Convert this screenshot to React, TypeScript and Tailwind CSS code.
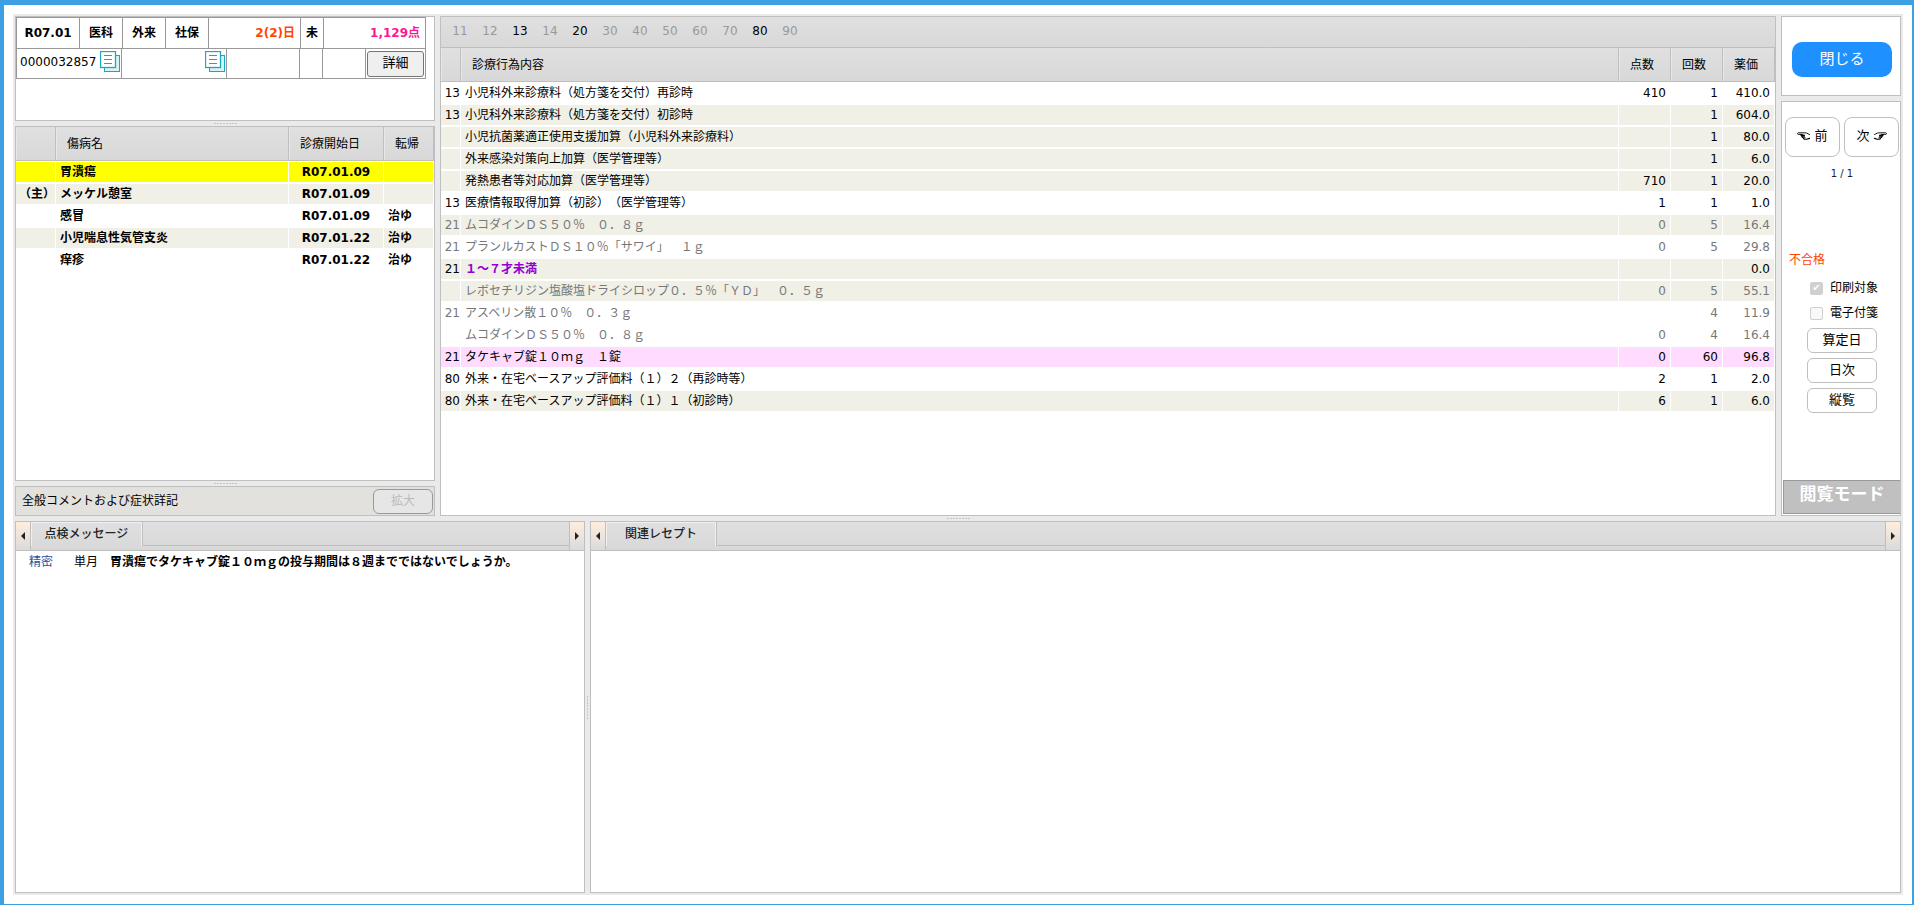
import { useState } from 'react'
import type { ReactNode } from 'react'

interface Disease {
  main?: boolean
  name: string
  start: string
  outcome?: string
  selected?: boolean
}

interface Treatment {
  code?: string
  name: string
  points?: string
  count?: string
  price: string
  tone?: 'muted' | 'comment' | 'hit'
  shaded?: boolean
}

const diseases: Disease[] = [
  { name: '胃潰瘍', start: 'R07.01.09', selected: true },
  { main: true, name: 'メッケル憩室', start: 'R07.01.09' },
  { name: '感冒', start: 'R07.01.09', outcome: '治ゆ' },
  { name: '小児喘息性気管支炎', start: 'R07.01.22', outcome: '治ゆ' },
  { name: '痒疹', start: 'R07.01.22', outcome: '治ゆ' },
]

const treatments: Treatment[] = [
  { code: '13', name: '小児科外来診療料（処方箋を交付）再診時', points: '410', count: '1', price: '410.0' },
  { code: '13', name: '小児科外来診療料（処方箋を交付）初診時', count: '1', price: '604.0', shaded: true },
  { name: '小児抗菌薬適正使用支援加算（小児科外来診療料）', count: '1', price: '80.0', shaded: true },
  { name: '外来感染対策向上加算（医学管理等）', count: '1', price: '6.0', shaded: true },
  { name: '発熱患者等対応加算（医学管理等）', points: '710', count: '1', price: '20.0', shaded: true },
  { code: '13', name: '医療情報取得加算（初診）（医学管理等）', points: '1', count: '1', price: '1.0' },
  { code: '21', name: 'ムコダインＤＳ５０％　０．８ｇ', points: '0', count: '5', price: '16.4', tone: 'muted', shaded: true },
  { code: '21', name: 'プランルカストＤＳ１０％「サワイ」　１ｇ', points: '0', count: '5', price: '29.8', tone: 'muted' },
  { code: '21', name: '１～７才未満', price: '0.0', tone: 'comment', shaded: true },
  { name: 'レボセチリジン塩酸塩ドライシロップ０．５％「ＹＤ」　０．５ｇ', points: '0', count: '5', price: '55.1', tone: 'muted', shaded: true },
  { code: '21', name: 'アスベリン散１０％　０．３ｇ', count: '4', price: '11.9', tone: 'muted' },
  { name: 'ムコダインＤＳ５０％　０．８ｇ', points: '0', count: '4', price: '16.4', tone: 'muted' },
  { code: '21', name: 'タケキャブ錠１０ｍｇ　１錠', points: '0', count: '60', price: '96.8', tone: 'hit' },
  { code: '80', name: '外来・在宅ベースアップ評価料（１）２（再診時等）', points: '2', count: '1', price: '2.0' },
  { code: '80', name: '外来・在宅ベースアップ評価料（１）１（初診時）', points: '6', count: '1', price: '6.0', shaded: true },
]

const categories = ['11', '12', '13', '14', '20', '30', '40', '50', '60', '70', '80', '90']
const activeCategories = ['13', '20', '80']

const headCell =
  'border-r border-b border-[#bfbfbf] bg-linear-to-b from-[#e0e0e0] to-[#d8d8d8] font-normal shadow-[inset_1px_0_0_#e8e8e8]'
const bodyCell = 'h-[22px] border-y border-r border-white bg-clip-padding p-0 leading-5'
const sideButton =
  'h-[25px] w-[70px] rounded-md border border-[#bfbfbf] bg-white pb-0.5 text-[13px] leading-5 hover:bg-gray-50'
const pagerButton =
  'flex h-10 w-[55px] items-center justify-center gap-1 rounded-lg border border-[#bfbfbf] pb-0.5 text-[13px] hover:bg-gray-50'

function CopyIcon() {
  return (
    <svg width="20" height="21" viewBox="0 0 20 21" fill="#fff" stroke="#17a9c0" className="shrink-0">
      <rect x="4.5" y="4.5" width="15" height="16" fill="#d9f2f6" />
      <rect x="0.5" y="0.5" width="15" height="16" strokeWidth="1.3" />
      <path d="M4 4.5h8M4 8.5h8M4 12.5h8" />
    </svg>
  )
}

function HandIcon({ flip = false }: { flip?: boolean }) {
  return (
    <svg
      width="13"
      height="8"
      viewBox="0 0 13 8"
      fill="none"
      stroke="#000"
      strokeLinecap="round"
      strokeLinejoin="round"
      className={flip ? '-scale-x-100' : ''}
    >
      <path d="M12.5 2.5 9.5 1 7 .8H1.2C.3 1 .3 2.2 1.2 2.4H5" strokeWidth="0.9" />
      <path d="M4 2.6 7.5 3.2M4.2 2.8c-.4.6 0 1.2.8 1.3h2.6M5.2 4.4c-.3.7.1 1.3.8 1.3h2M6.4 6c0 .7.5 1.2 1.2 1.2h2L12.5 6.4" strokeWidth="1.1" />
    </svg>
  )
}

function Handle({ vertical = false }: { vertical?: boolean }) {
  return (
    <div
      className={
        vertical
          ? 'flex w-[5px] shrink-0 items-center justify-center'
          : 'flex h-[5px] shrink-0 items-center justify-center'
      }
    >
      <span
        className={
          vertical
            ? 'h-[23px] w-px bg-[repeating-linear-gradient(to_bottom,#c4c4c4_0_2px,transparent_2px_3px)]'
            : 'h-px w-[23px] bg-[repeating-linear-gradient(to_right,#c4c4c4_0_2px,transparent_2px_3px)]'
        }
      />
    </div>
  )
}

function ScrollButton({ dir }: { dir: 'left' | 'right' }) {
  return (
    <button
      aria-label={dir === 'left' ? '前のタブ' : '次のタブ'}
      className={`flex w-[15px] shrink-0 items-center justify-center border-[#bfbfbf] bg-linear-to-b from-[#ffeedd] to-[#dadada] ${
        dir === 'left' ? 'border-r' : 'border-l'
      }`}
    >
      <svg width="4" height="8" viewBox="0 0 4 8" fill="#222">
        <path d={dir === 'left' ? 'M4 0v8L0 4z' : 'M0 0v8l4-4z'} />
      </svg>
    </button>
  )
}

interface TabPanelProps {
  title: string
  tabClass: string
  className: string
  children?: ReactNode
}

function TabPanel({ title, tabClass, className, children }: TabPanelProps) {
  return (
    <section className={`flex min-w-0 flex-col border border-[#bfbfbf] bg-white ${className}`}>
      <div className="flex h-[29px] shrink-0 border-b border-[#bfbfbf] bg-linear-to-b from-[#e0e0e0] to-[#d8d8d8]">
        <ScrollButton dir="left" />
        <div className="flex h-6 flex-1">
          <button
            className={`border-x border-t border-[#f0f0f0] pb-0.5 leading-5 font-medium text-[#222] shadow-[1px_0_0_#bfbfbf] ${tabClass}`}
          >
            {title}
          </button>
          <div className="ml-px flex-1 border-b border-[#bfbfbf]" />
        </div>
        <ScrollButton dir="right" />
      </div>
      {children}
    </section>
  )
}

function PatientInfo() {
  const cell = 'flex items-center border-r border-[#999]'
  return (
    <div className="h-[105px] border border-[#bfbfbf] bg-white">
      <div className="w-[410px] border-t border-l border-[#999]">
        <div className="flex h-[31px] border-b border-[#999] font-bold">
          <div className={`${cell} w-[63px] justify-center`}>R07.01</div>
          <div className={`${cell} w-[43px] justify-center`}>医科</div>
          <div className={`${cell} w-[43px] justify-center`}>外来</div>
          <div className={`${cell} w-[43px] justify-center`}>社保</div>
          <div className={`${cell} w-[92px] justify-end pr-[5px] text-[#ff4500]`}>2(2)日</div>
          <div className={`${cell} w-[23px] justify-center`}>未</div>
          <div className={`${cell} flex-1 justify-end pr-[5px] text-[#ff1493]`}>1,129点</div>
        </div>
        <div className="flex h-[30px] border-b border-[#999]">
          <div className={`${cell} w-[105px] justify-between pr-px pb-1 pl-[3px]`}>
            <span>0000032857</span>
            <CopyIcon />
          </div>
          <div className={`${cell} w-[105px] justify-end pr-px pb-1`}>
            <CopyIcon />
          </div>
          <div className={`${cell} w-[73px]`} />
          <div className={`${cell} w-[23px]`} />
          <div className={`${cell} w-[43px]`} />
          <div className={`${cell} flex-1 justify-center`}>
            <button className="h-[26px] w-[57px] rounded-[3px] border border-[#767676] bg-[#efefef] pb-0.5 text-[13px] hover:bg-gray-200">
              詳細
            </button>
          </div>
        </div>
      </div>
    </div>
  )
}

function DiseaseTable() {
  return (
    <div className="min-h-0 flex-1 border border-[#bfbfbf] bg-white">
      <table className="w-full table-fixed border-separate border-spacing-0">
        <colgroup>
          <col className="w-10" />
          <col />
          <col className="w-[95px]" />
          <col className="w-[50px]" />
        </colgroup>
        <thead>
          <tr className="h-[34px]">
            <th className={headCell} />
            <th className={`${headCell} pl-[11px] text-left`}>傷病名</th>
            <th className={`${headCell} pl-[11px] text-left`}>診療開始日</th>
            <th className={`${headCell} pl-[11px] text-left`}>転帰</th>
          </tr>
        </thead>
        <tbody className="font-bold">
          {diseases.map((d, i) => {
            const bg = d.selected ? 'bg-[#ffff00]' : i % 2 === 1 ? 'bg-[#f0f0e6]' : 'bg-white'
            return (
              <tr key={d.name}>
                <td className={`${bodyCell} ${bg} text-right`}>{d.main && '（主）'}</td>
                <td className={`${bodyCell} ${bg} pl-1`}>{d.name}</td>
                <td className={`${bodyCell} ${bg} text-center`}>{d.start}</td>
                <td className={`${bodyCell} ${bg} pl-1`}>{d.outcome}</td>
              </tr>
            )
          })}
        </tbody>
      </table>
    </div>
  )
}

function TreatmentPanel() {
  return (
    <section className="flex min-w-0 flex-1 flex-col border border-[#bfbfbf] bg-white">
      <nav className="flex h-[31px] shrink-0 items-center border-b border-[#bfbfbf] bg-linear-to-b from-[#e0e0e0] to-[#d8d8d8] pb-0.5 pl-1">
        {categories.map((c) => (
          <button
            key={c}
            disabled={!activeCategories.includes(c)}
            className="w-[30px] text-center disabled:text-[#999]"
          >
            {c}
          </button>
        ))}
      </nav>
      <table className="w-full table-fixed border-separate border-spacing-0">
        <colgroup>
          <col className="w-5" />
          <col />
          <col className="w-[52px]" />
          <col className="w-[52px]" />
          <col className="w-[52px]" />
        </colgroup>
        <thead>
          <tr className="h-[34px]">
            <th className={headCell} />
            <th className={`${headCell} pl-[11px] text-left`}>診療行為内容</th>
            <th className={`${headCell} pl-[11px] text-left`}>点数</th>
            <th className={`${headCell} pl-[11px] text-left`}>回数</th>
            <th className={`${headCell} pl-[11px] text-left`}>薬価</th>
          </tr>
        </thead>
        <tbody>
          {treatments.map((t, i) => {
            const bg = t.tone === 'hit' ? 'bg-[#ffdcff]' : t.shaded ? 'bg-[#f0f0e6]' : 'bg-white'
            const color = t.tone === 'muted' ? 'text-[#777]' : 'text-black'
            return (
              <tr key={i} className={color}>
                <td className={`${bodyCell} ${bg} text-right`}>{t.code}</td>
                <td className={`${bodyCell} ${bg} pl-1 ${t.tone === 'comment' ? 'font-bold text-[#9400d3]' : ''}`}>
                  {t.name}
                </td>
                <td className={`${bodyCell} ${bg} pr-1 text-right`}>{t.points}</td>
                <td className={`${bodyCell} ${bg} pr-1 text-right`}>{t.count}</td>
                <td className={`${bodyCell} ${bg} pr-1 text-right`}>{t.price}</td>
              </tr>
            )
          })}
        </tbody>
      </table>
    </section>
  )
}

function SidePanel() {
  const [printTarget, setPrintTarget] = useState(true)
  const [note, setNote] = useState(false)
  const box =
    "grid size-[13px] appearance-none place-items-center rounded-xs border border-[#d0d0d0] bg-[#f8f8f8] text-[10px] leading-none text-white checked:bg-[#d0d0d0] checked:before:content-['✔']"

  return (
    <aside className="flex w-[120px] shrink-0 flex-col gap-[5px]">
      <div className="flex h-20 justify-center border border-[#bfbfbf] bg-white pt-[25px] pl-0.5">
        <button className="h-[35px] w-[100px] rounded-[10px] bg-[#1e90ff] pb-0.5 text-[15px] text-white hover:bg-blue-500">
          閉じる
        </button>
      </div>
      <div className="flex min-h-0 flex-1 flex-col border border-[#bfbfbf] bg-white">
        <div className="flex flex-col items-center pt-[15px] pl-0.5">
          <div className="flex gap-1">
            <button className={pagerButton}>
              <HandIcon />前
            </button>
            <button className={pagerButton}>
              次<HandIcon flip />
            </button>
          </div>
          <div className="mt-[9px] text-[10px] leading-4 text-[#222]">1 / 1</div>
          <div className="mt-[68px] w-full pl-[5px] leading-5 text-[#ff4500]">不合格</div>
          <div className="mt-2 grid gap-[5px] pl-1 leading-5">
            <label className="flex items-center gap-[7px]">
              <input type="checkbox" disabled checked={printTarget} onChange={(e) => setPrintTarget(e.target.checked)} className={box} />
              印刷対象
            </label>
            <label className="flex items-center gap-[7px]">
              <input type="checkbox" disabled checked={note} onChange={(e) => setNote(e.target.checked)} className={box} />
              電子付箋
            </label>
          </div>
          <div className="mt-[5px] grid gap-[5px]">
            <button className={sideButton}>算定日</button>
            <button className={sideButton}>日次</button>
            <button className={sideButton}>縦覧</button>
          </div>
        </div>
        <div className="mt-auto mb-px ml-px h-[34px] border border-r-0 border-[#999] bg-[#c0c0c0] text-center text-[17px] leading-[26px] font-bold text-white">
          閲覧モード
        </div>
      </div>
    </aside>
  )
}

export default function App() {
  return (
    <div className="h-screen border-t-[5px] border-r-2 border-b border-l-4 border-[#3da0e3] bg-white p-[9px] font-['DejaVu_Sans','Noto_Sans_CJK_JP',sans-serif] text-[12px] leading-5 text-black [text-spacing-trim:space-all]">
      <main className="flex h-full flex-col bg-[#eaeaea] p-0.5">
        <div className="flex h-[500px] shrink-0 gap-[5px]">
          <div className="flex w-[420px] shrink-0 flex-col">
            <PatientInfo />
            <Handle />
            <DiseaseTable />
            <Handle />
            <div className="flex h-[30px] shrink-0 items-center justify-between border border-[#bfbfbf] bg-[#e2e1dd] pr-px pl-1.5">
              <span>全般コメントおよび症状詳記</span>
              <button
                disabled
                className="h-[25px] w-[60px] rounded-md border border-[#999] bg-[#e6e6e6] disabled:text-[#bbb]"
              >
                拡大
              </button>
            </div>
          </div>
          <TreatmentPanel />
          <SidePanel />
        </div>
        <Handle />
        <div className="flex min-h-0 flex-1">
          <TabPanel title="点検メッセージ" tabClass="w-[111px]" className="w-[570px] shrink-0">
            <p className="flex pl-[13px] leading-[22px]">
              <span className="w-[45px] text-[#1a56a0]">精密</span>
              <span className="w-9">単月</span>
              <span className="font-bold">胃潰瘍でタケキャブ錠１０ｍｇの投与期間は８週までではないでしょうか。</span>
            </p>
          </TabPanel>
          <Handle vertical />
          <TabPanel title="関連レセプト" tabClass="w-[110px]" className="flex-1" />
        </div>
      </main>
    </div>
  )
}
